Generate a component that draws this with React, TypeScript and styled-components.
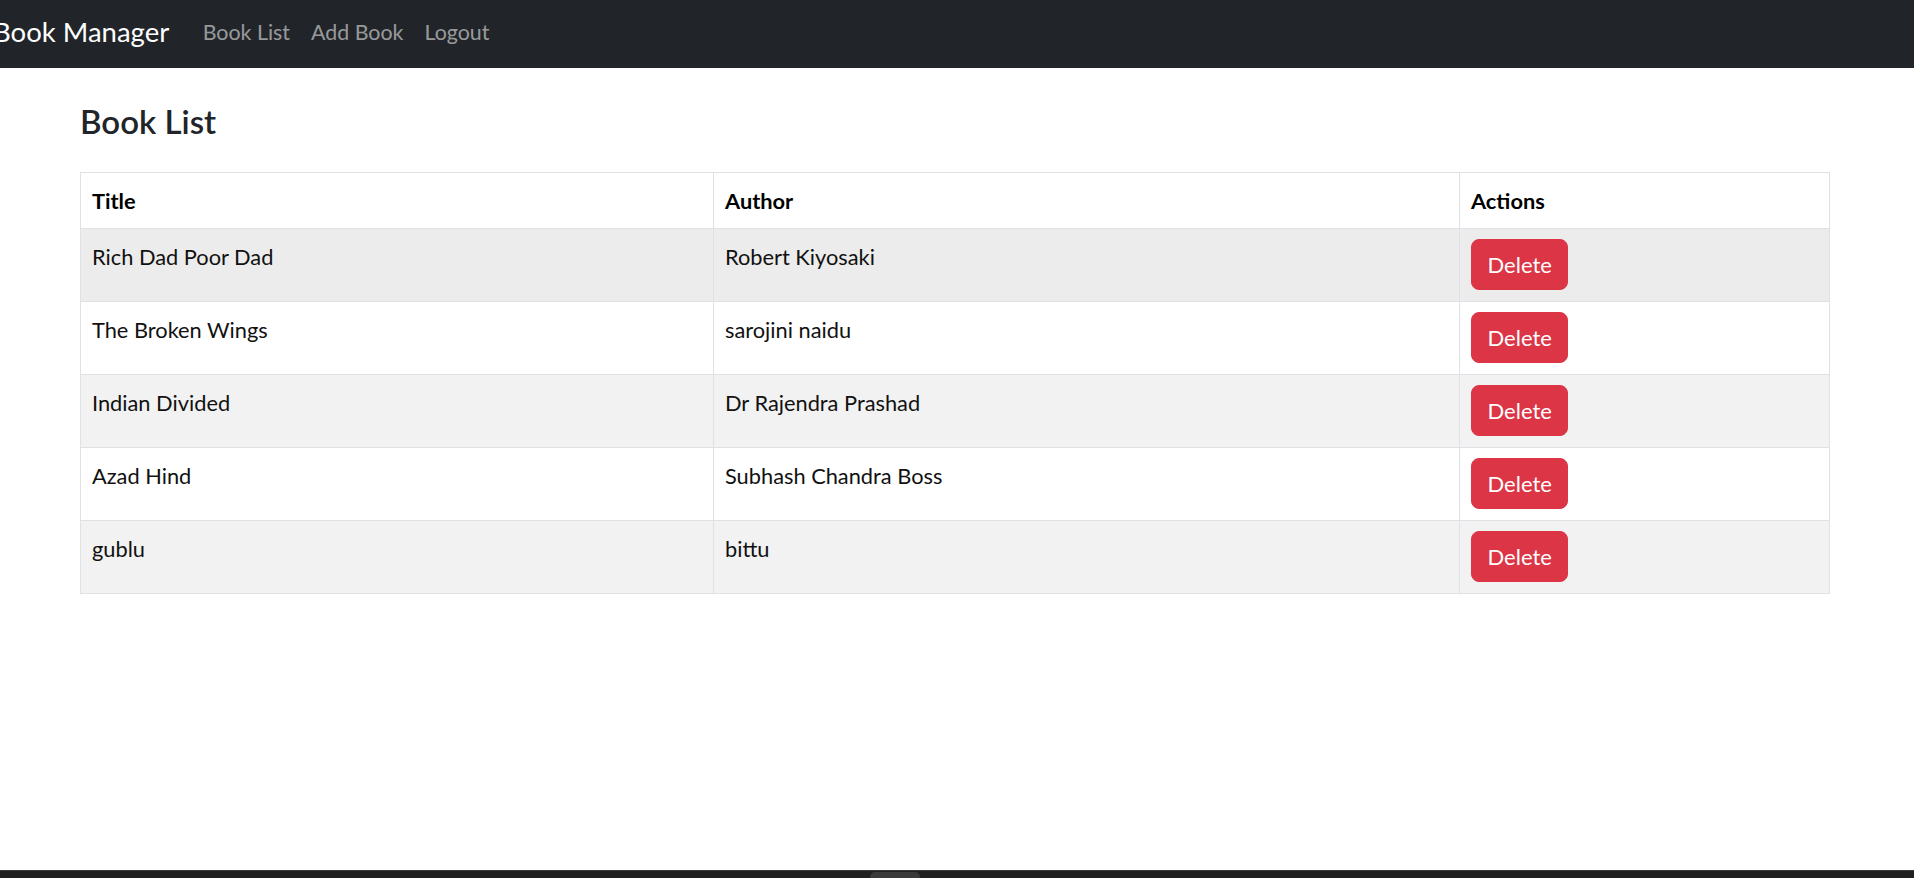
import React from "react";
import styled, { createGlobalStyle } from "styled-components";

const GlobalStyle = createGlobalStyle`
  html, body { margin: 0; padding: 0; }
  body {
    font-family: "Segoe UI", Lato, "Noto Sans", sans-serif;
    color: #212529;
    background: #ffffff;
    overflow: hidden;
  }
  * { box-sizing: border-box; }
`;

const Page = styled.div`
  display: flex;
  flex-direction: column;
  height: 100vh;
`;

const Navbar = styled.nav`
  flex: 0 0 68px;
  display: flex;
  align-items: center;
  padding: 0 0 4px 0;
  background: #212529;
`;

const Brand = styled.a`
  margin-left: -7px;
  margin-right: 23px;
  font-size: 27.5px;
  line-height: 1.5;
  color: #ffffff;
  text-decoration: none;
  white-space: nowrap;
`;

const NavLink = styled.a`
  padding: 0 10.5px;
  font-size: 21.4px;
  line-height: 1.5;
  color: rgba(255, 255, 255, 0.55);
  text-decoration: none;
  white-space: nowrap;
`;

const Main = styled.main`
  flex: 1 1 auto;
  padding: 33px 84px 0 80px;
`;

const Heading = styled.h4`
  margin: 0 0 31px 0;
  font-size: 33px;
  line-height: 40px;
  font-weight: 600;
  color: #212529;
`;

const Table = styled.table`
  width: 100%;
  border-collapse: collapse;
  vertical-align: top;
  font-size: 21.8px;
  line-height: 33px;
  color: #212529;
`;

const HeadCell = styled.th<{ $w?: number }>`
  width: ${(p) => (p.$w ? `${p.$w}px` : "auto")};
  padding: 11px;
  border: 1px solid #dee2e6;
  text-align: left;
  font-weight: 700;
  color: #000000;
  vertical-align: top;
`;

const Row = styled.tr<{ $bg: string }>`
  background: ${(p) => p.$bg};
`;

const Cell = styled.td`
  padding: 11px;
  height: 73px;
  border: 1px solid #dee2e6;
  vertical-align: top;
  color: #111111;
`;

const DeleteButton = styled.button`
  display: inline-block;
  height: 51px;
  padding: 0 15.5px;
  margin-top: -1px;
  border: 1px solid #dc3545;
  border-radius: 8px;
  background: #dc3545;
  color: #ffffff;
  font-family: inherit;
  font-size: 22px;
  line-height: 33px;
  cursor: pointer;
`;

const Taskbar = styled.div`
  flex: 0 0 8px;
  display: flex;
  justify-content: flex-start;
  padding-left: 870px;
  background: #1f1f1f;
  border-top: 1px solid #3a3a3a;
`;

const TaskItem = styled.div`
  width: 50px;
  height: 100%;
  margin-top: 1px;
  border-radius: 5px 5px 0 0;
  background: #3a3a3a;
`;

const books = [
  { title: "Rich Dad Poor Dad", author: "Robert Kiyosaki", bg: "#ececec" },
  { title: "The Broken Wings", author: "sarojini naidu", bg: "#ffffff" },
  { title: "Indian Divided", author: "Dr Rajendra Prashad", bg: "#f2f2f2" },
  { title: "Azad Hind", author: "Subhash Chandra Boss", bg: "#ffffff" },
  { title: "gublu", author: "bittu", bg: "#f2f2f2" },
];

export default function App() {
  return (
    <Page>
      <GlobalStyle />
      <Navbar>
        <Brand href="#">Book Manager</Brand>
        <NavLink href="#">Book List</NavLink>
        <NavLink href="#">Add Book</NavLink>
        <NavLink href="#">Logout</NavLink>
      </Navbar>
      <Main>
        <Heading>Book List</Heading>
        <Table>
          <thead>
            <tr>
              <HeadCell $w={633}>Title</HeadCell>
              <HeadCell $w={746}>Author</HeadCell>
              <HeadCell>Actions</HeadCell>
            </tr>
          </thead>
          <tbody>
            {books.map((b) => (
              <Row key={b.title} $bg={b.bg}>
                <Cell>{b.title}</Cell>
                <Cell>{b.author}</Cell>
                <Cell>
                  <DeleteButton>Delete</DeleteButton>
                </Cell>
              </Row>
            ))}
          </tbody>
        </Table>
      </Main>
      <Taskbar>
        <TaskItem />
      </Taskbar>
    </Page>
  );
}
